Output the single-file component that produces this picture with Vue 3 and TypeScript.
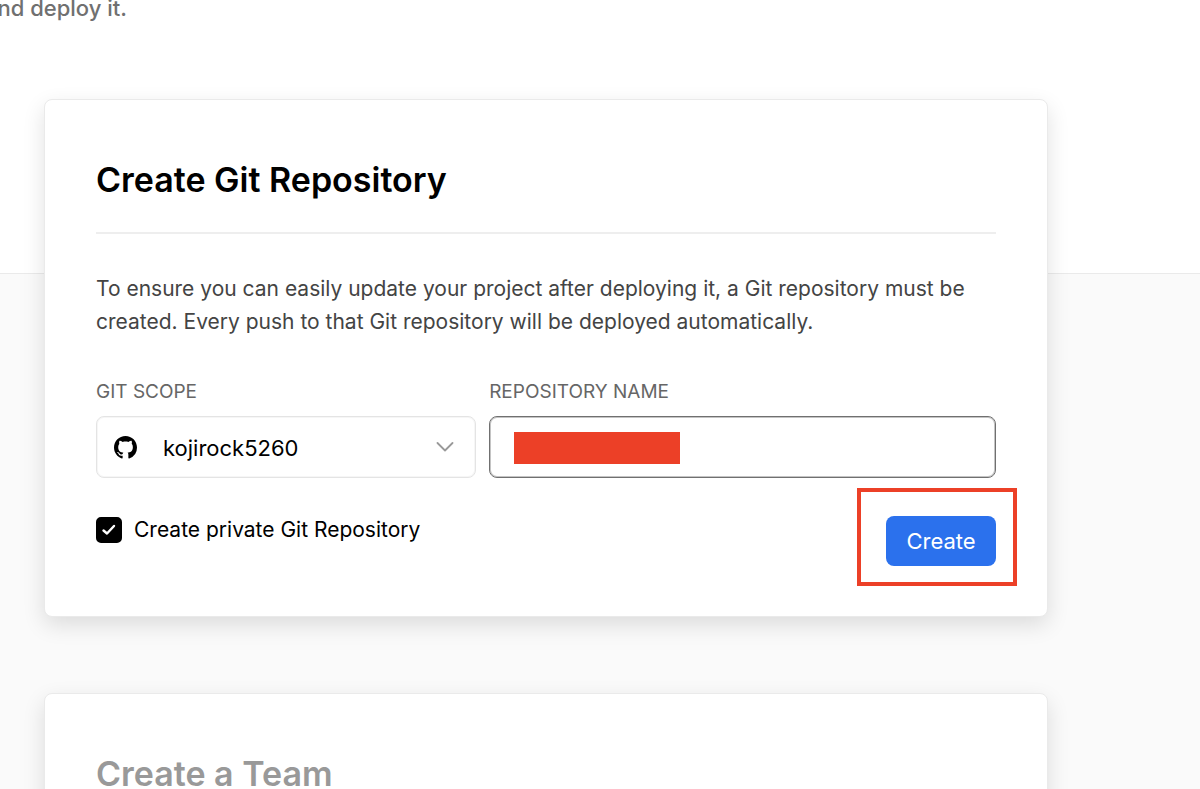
<script setup lang="ts">
import { ref } from 'vue'

const scopes: string[] = ['kojirock5260']
const scope = ref<string>(scopes[0])
const repositoryName = ref<string>('')
const isPrivate = ref<boolean>(true)
</script>

<template>
  <div class="page">
    <header class="hero">
      <p class="hero-text">and deploy it.</p>
    </header>
    <main class="cards">
      <form class="card" @submit.prevent>
        <h2 class="title ruled">Create Git Repository</h2>
        <p class="description">
          To ensure you can easily update your project after deploying it, a Git repository must be
          created. Every push to that Git repository will be deployed automatically.
        </p>
        <div class="fields">
          <div class="field">
            <label class="label" for="scope">GIT SCOPE</label>
            <div class="control">
              <select id="scope" v-model="scope" class="box select">
                <option v-for="name in scopes" :key="name" :value="name">{{ name }}</option>
              </select>
              <svg class="github" viewBox="0 0 16 16" aria-hidden="true">
                <path
                  d="M8 0C3.58 0 0 3.58 0 8c0 3.54 2.29 6.53 5.47 7.59.4.07.55-.17.55-.38 0-.19-.01-.82-.01-1.49-2.01.37-2.53-.49-2.69-.94-.09-.23-.48-.94-.82-1.13-.28-.15-.68-.52-.01-.53.63-.01 1.08.58 1.23.82.72 1.21 1.87.87 2.33.66.07-.52.28-.87.51-1.07-1.78-.2-3.64-.89-3.64-3.95 0-.87.31-1.59.82-2.15-.08-.2-.36-1.02.08-2.12 0 0 .67-.21 2.2.82.64-.18 1.32-.27 2-.27s1.36.09 2 .27c1.53-1.04 2.2-.82 2.2-.82.44 1.1.16 1.92.08 2.12.51.56.82 1.27.82 2.15 0 3.07-1.87 3.75-3.65 3.95.29.25.54.73.54 1.48 0 1.07-.01 1.93-.01 2.2 0 .21.15.46.55.38A8.01 8.01 0 0 0 16 8c0-4.42-3.58-8-8-8z"
                />
              </svg>
              <svg class="chevron" viewBox="0 0 18 10" aria-hidden="true">
                <path d="M1.500 1L9 8.500L16.500 1" />
              </svg>
            </div>
          </div>
          <div class="field">
            <label class="label" for="repository">REPOSITORY NAME</label>
            <div class="control">
              <input id="repository" v-model="repositoryName" class="box input" type="text" />
              <span class="redaction"></span>
            </div>
          </div>
        </div>
        <div class="actions">
          <label class="private">
            <span class="tick">
              <input v-model="isPrivate" class="checkbox" type="checkbox" />
              <svg v-if="isPrivate" class="check" viewBox="0 0 26 26" aria-hidden="true">
                <path d="M7.500 13.500L11 16.500L18 9" />
              </svg>
            </span>
            Create private Git Repository
          </label>
          <div class="submit">
            <button class="create" type="submit">Create</button>
            <span class="highlight"></span>
          </div>
        </div>
      </form>
      <section class="card">
        <h2 class="title muted">Create a Team</h2>
      </section>
    </main>
  </div>
</template>

<style>
body {
  margin: 0;
}
</style>

<style scoped>
.page {
  height: 100vh;
  overflow: hidden;
  background: #fafafa;
  color: #000;
  font-family: Inter, 'Liberation Sans', sans-serif;
  font-size: 21px;
  line-height: 33px;
}

.page * {
  box-sizing: border-box;
}

.hero {
  height: 274px;
  background: #fff;
  border-bottom: 1px solid #eaeaea;
}

.hero-text {
  margin: 0 0 0 -15px;
  font-size: 22px;
  line-height: 16px;
  font-weight: 500;
  color: #707070;
}

.cards {
  display: flex;
  flex-direction: column;
  gap: 76px;
  margin-top: -175px;
  padding: 0 152px 0 44px;
}

.card {
  padding: 56px 51px 50px;
  background: #fff;
  border: 1px solid #eaeaea;
  border-radius: 8px;
  box-shadow: 0 8px 22px rgba(0, 0, 0, 0.12);
}

.title {
  margin: 0;
  font-size: 34px;
  line-height: 48px;
  font-weight: 600;
}

.ruled {
  padding-bottom: 28px;
  border-bottom: 2px solid #eee;
}

.muted {
  color: #999;
}

.description {
  margin: 38px 0;
  color: #444;
}

.fields {
  display: grid;
  grid-template-columns: 3fr 4fr;
  gap: 13px;
}

.label {
  display: block;
  margin-bottom: 8px;
  font-size: 19px;
  line-height: 32px;
  color: #666;
}

.control {
  position: relative;
  height: 62px;
}

.box {
  display: block;
  width: 100%;
  height: 100%;
  margin: 0;
  border: 1px solid #e4e4e4;
  border-radius: 8px;
  background: #fff;
  color: #000;
  font: inherit;
  font-size: 22px;
  outline: none;
  appearance: none;
  box-shadow: inset 0 0 0 1px #f6f6f6;
}

.select {
  padding: 2px 60px 0 66px;
}

.input {
  padding: 0 24px;
  border-color: #707070;
  box-shadow: inset 0 0 0 1px #c4c4c4;
}

.github {
  position: absolute;
  top: 20px;
  left: 18px;
  width: 23px;
  height: 23px;
  pointer-events: none;
}

.chevron {
  position: absolute;
  top: 26px;
  right: 22px;
  width: 18px;
  height: 10px;
  fill: none;
  stroke: #999;
  stroke-width: 1.800;
  stroke-linecap: round;
  stroke-linejoin: round;
  pointer-events: none;
}

.redaction {
  position: absolute;
  top: 16px;
  left: 25px;
  width: 166px;
  height: 32px;
  background: #ec4027;
}

.actions {
  display: flex;
  justify-content: space-between;
  align-items: flex-start;
  padding-top: 38px;
}

.private {
  display: flex;
  align-items: center;
  gap: 12px;
  line-height: 28px;
}

.tick {
  position: relative;
  width: 26px;
  height: 26px;
}

.checkbox {
  display: block;
  width: 26px;
  height: 26px;
  margin: 0;
  border: 2px solid #000;
  border-radius: 5px;
  appearance: none;
}

.checkbox:checked {
  background: #000;
}

.check {
  position: absolute;
  inset: 0;
  fill: none;
  stroke: #fff;
  stroke-width: 2.400;
  stroke-linecap: round;
  stroke-linejoin: round;
  pointer-events: none;
}

.submit {
  position: relative;
}

.create {
  display: block;
  width: 110px;
  height: 50px;
  padding: 0;
  border: 0;
  border-radius: 8px;
  background: #2b71ed;
  color: #fff;
  font: inherit;
  font-size: 22px;
}

.highlight {
  position: absolute;
  inset: -28px -21px -20px -29px;
  border: 4px solid #ec4027;
  pointer-events: none;
}
</style>
